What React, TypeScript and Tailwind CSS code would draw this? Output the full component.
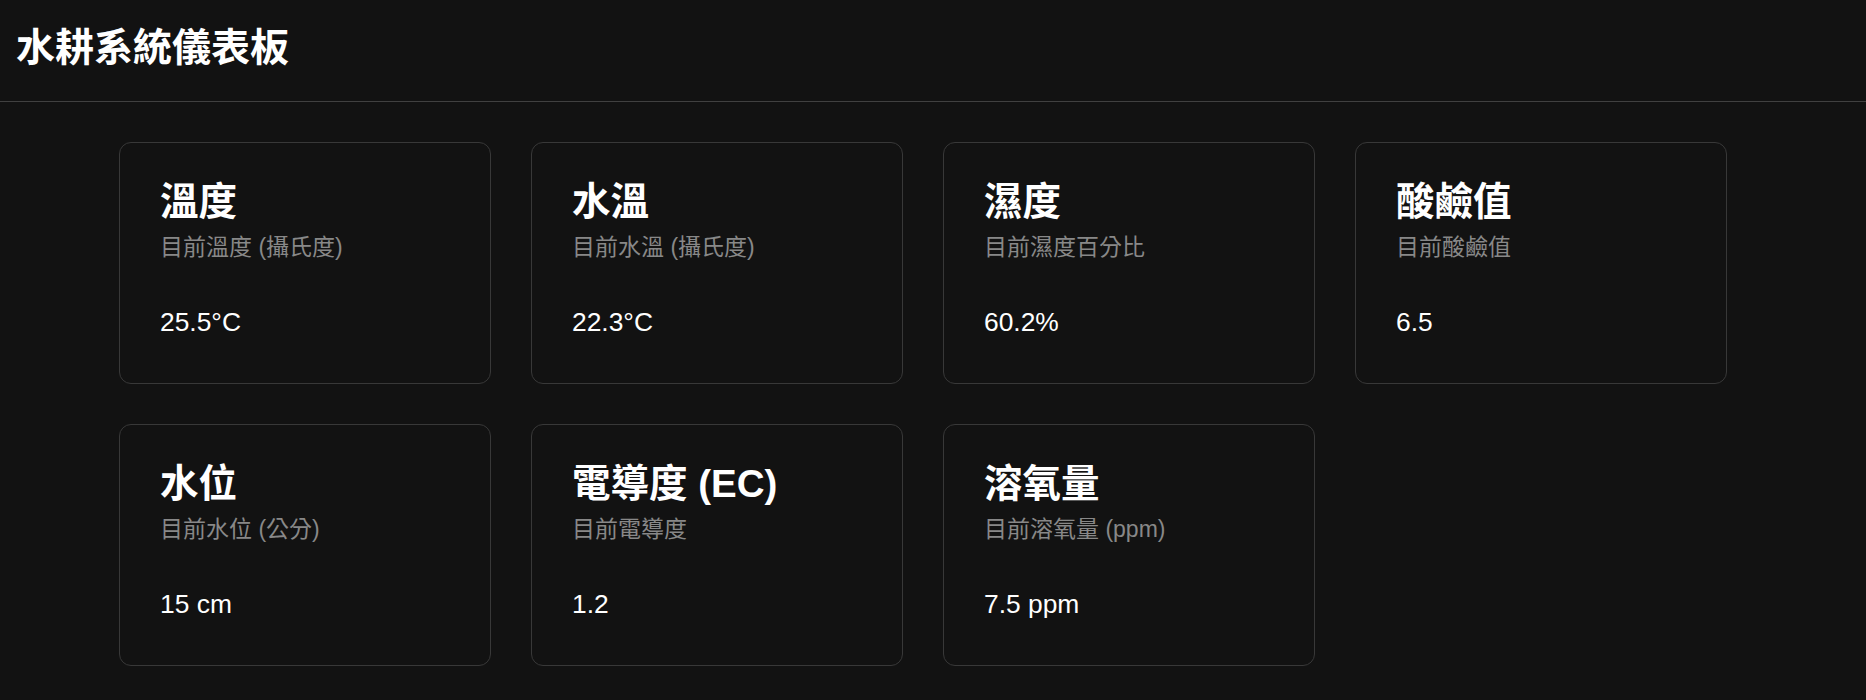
const sensors = [
  { title: "溫度", desc: "目前溫度 (攝氏度)", value: "25.5°C" },
  { title: "水溫", desc: "目前水溫 (攝氏度)", value: "22.3°C" },
  { title: "濕度", desc: "目前濕度百分比", value: "60.2%" },
  { title: "酸鹼值", desc: "目前酸鹼值", value: "6.5" },
  { title: "水位", desc: "目前水位 (公分)", value: "15 cm" },
  { title: "電導度 (EC)", desc: "目前電導度", value: "1.2" },
  { title: "溶氧量", desc: "目前溶氧量 (ppm)", value: "7.5 ppm" },
];

const SensorCard = ({ title, desc, value }: { title: string; desc: string; value: string }) => {
  return (
    <div className="h-[242px] rounded-[12px] border border-[#383838] px-[40px] pt-[36px]">
      <h2 className="text-[38.5px] leading-[46px] font-bold text-white">{title}</h2>
      <p className="mt-[8px] text-[23px] leading-[28px] text-[#888888]">{desc}</p>
      <p className="mt-[45px] text-[26.4px] leading-[32px] text-white">{value}</p>
    </div>
  );
};

export default function App() {
  return (
    <div
      className="min-h-[700px] bg-[#121212] text-white"
      style={{ fontFamily: '"Liberation Sans", "Noto Sans CJK TC", sans-serif' }}
    >
      <header className="h-[102px] border-b border-[#404040] px-[16px] pt-[25px]">
        <h1 className="text-[39px] leading-[46px] font-bold">水耕系統儀表板</h1>
      </header>
      <main className="grid grid-cols-[repeat(4,372px)] gap-[40px] pl-[119px] pt-[40px]">
        {sensors.map((s) => (
          <SensorCard key={s.title} {...s} />
        ))}
      </main>
    </div>
  );
}
